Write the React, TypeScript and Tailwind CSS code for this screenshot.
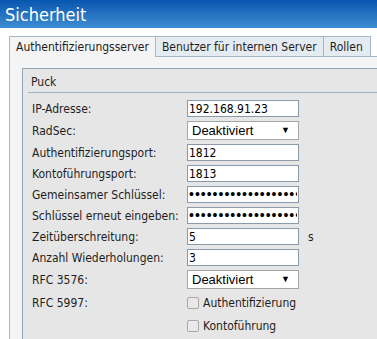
import React from "react";

const font = { fontFamily: "'DejaVu Sans Condensed', 'DejaVu Sans', sans-serif" };
const pwFont = { fontFamily: "'Liberation Sans', sans-serif" };

function TextRow({ label, value, password, suffix }: { label: string; value: string; password?: boolean; suffix?: string }) {
  return (
    <div className="flex items-center h-[17px]">
      <div className="w-[155px] shrink-0">{label}</div>
      <input
        readOnly
        type={password ? "password" : "text"}
        value={value}
        className={`w-[112px] h-[17px] border border-[#8a9aab] bg-white px-[1px] text-black outline-none ${password ? "text-[14px] tracking-[1px]" : "text-[12px]"}`}
        style={password ? pwFont : font}
      />
      {suffix && <span className="ml-[9px]">{suffix}</span>}
    </div>
  );
}

function SelectRow({ label }: { label: string }) {
  return (
    <div className="flex items-center h-[19px]">
      <div className="w-[155px] shrink-0">{label}</div>
      <div className="w-[112px] h-[19px] border border-[#a6a6a6] bg-white flex items-center justify-between pl-[4px] pr-[8px] font-['Liberation_Sans',sans-serif] text-[13px] text-black">
        <span>Deaktiviert</span>
        <span className="text-[9px]">▼</span>
      </div>
    </div>
  );
}

function CheckRow({ label, text }: { label: string; text: string }) {
  return (
    <div className="flex items-center h-[19px]">
      <div className="w-[155px] shrink-0">{label}</div>
      <div className="flex items-center gap-[4px]">
        <span className="w-[12px] h-[12px] rounded-[2px] border border-[#a9a9a9] bg-[#e9e9e9]" />
        <span>{text}</span>
      </div>
    </div>
  );
}

export default function App() {
  return (
    <div className="w-[377px] h-[339px] overflow-hidden bg-white text-[12px] text-[#1e1e1e]" style={font}>
      {/* Title bar */}
      <div className="h-[28px] bg-gradient-to-b from-[#0656b0] to-[#3e8dd1] text-white text-[18px] pl-[5px] flex items-center">
        Sicherheit
      </div>

      <div className="ml-[9px] mt-[8px]">
        {/* Tabs */}
        <div className="flex h-[21px] border-b border-[#a7b7c7]">
          <div className="h-[21px] px-[6px] border border-b-0 border-[#a7b7c7] bg-[#f4f4f4] flex items-center">
            Authentifizierungsserver
          </div>
          <div className="h-[20px] px-[6px] border border-l-0 border-b-0 border-[#a7b7c7] bg-[#e4ecf2] flex items-center">
            Benutzer für internen Server
          </div>
          <div className="h-[20px] pl-[6px] pr-[7px] border border-l-0 border-b-0 border-[#a7b7c7] bg-[#e4ecf2] flex items-center">
            Rollen
          </div>
        </div>

        {/* Tab content */}
        <div className="border-l border-[#a7b7c7] bg-[#f4f4f4] pl-[12px] pt-[11px] h-[300px]">
          <div className="w-[400px] h-[300px] border border-[#95a4b3] bg-[#e6e6e6]">
            <div className="mx-[5px] h-[24px] border-b border-[#9db2c6] pl-[3px] pt-[3px] flex items-center">
              Puck
            </div>
            <div className="pl-[9px] pt-[7px] flex flex-col gap-[4px]">
              <TextRow label="IP-Adresse:" value="192.168.91.23" />
              <SelectRow label="RadSec:" />
              <TextRow label="Authentifizierungsport:" value="1812" />
              <TextRow label="Kontoführungsport:" value="1813" />
              <TextRow label="Gemeinsamer Schlüssel:" value="xxxxxxxxxxxxxxxxxxxxxxxxxxxxxx" password />
              <TextRow label="Schlüssel erneut eingeben:" value="xxxxxxxxxxxxxxxxxxxxxxxxxxxxxx" password />
              <TextRow label="Zeitüberschreitung:" value="5" suffix="s" />
              <TextRow label="Anzahl Wiederholungen:" value="3" />
              <SelectRow label="RFC 3576:" />
              <CheckRow label="RFC 5997:" text="Authentifizierung" />
              <CheckRow label="" text="Kontoführung" />
            </div>
          </div>
        </div>
      </div>
    </div>
  );
}
